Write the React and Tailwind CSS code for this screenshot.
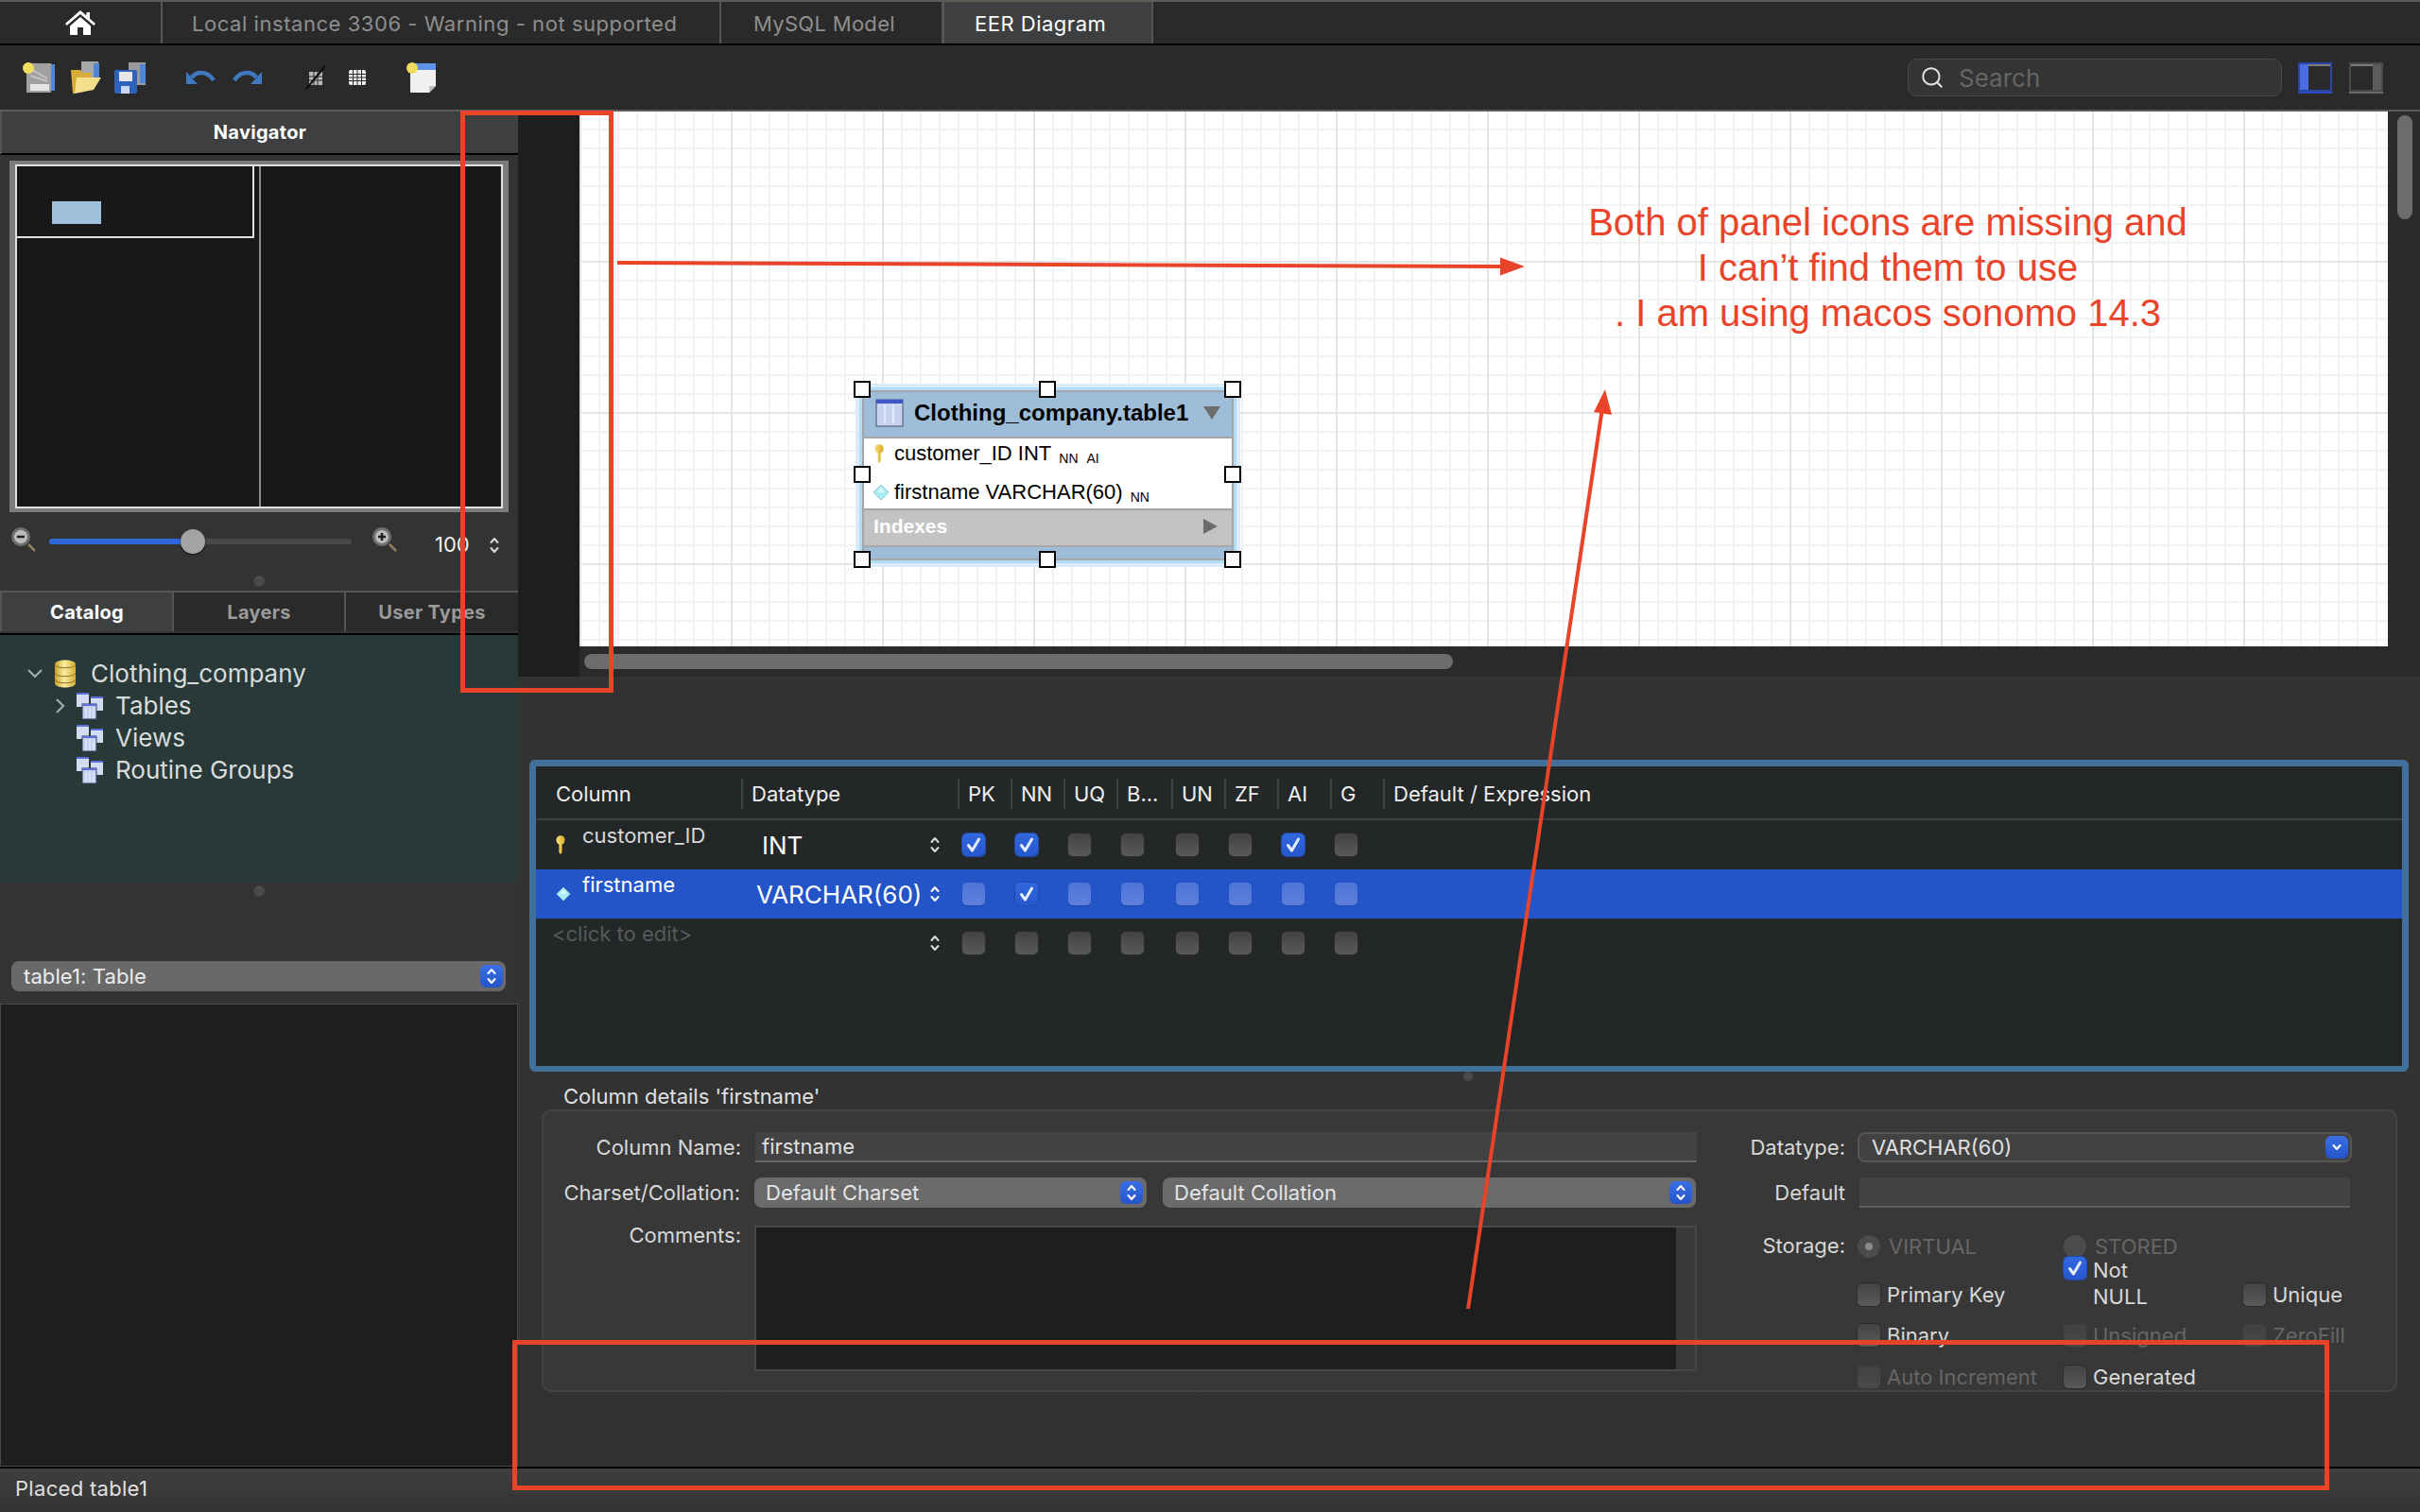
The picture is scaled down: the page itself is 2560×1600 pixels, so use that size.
import { Search } from 'lucide-react';

const TABLE_COLS = 'grid grid-cols-[217px_229px_56px_56px_56px_58px_56px_56px_56px_56px_1fr]';

function Stepper({ className = 'text-[#d8d8d8]' }) {
  return (
    <svg width="10" height="18" viewBox="0 0 10 18" fill="none" stroke="currentColor" strokeWidth="2" strokeLinecap="round" strokeLinejoin="round" className={className}>
      <path d="M1.5 6 5 2l3.5 4" />
      <path d="M1.5 12 5 16l3.5-4" />
    </svg>
  );
}

function BlueStepper({ down }) {
  return (
    <span className="flex h-6 w-6 items-center justify-center rounded-[6px] bg-gradient-to-b from-[#3a6fe6] to-[#2553c9] text-white">
      {down ? (
        <svg width="10" height="8" viewBox="0 0 10 8" fill="none" stroke="currentColor" strokeWidth="2" strokeLinecap="round" strokeLinejoin="round"><path d="M1.5 2 5 6l3.5-4" /></svg>
      ) : (
        <Stepper className="text-white" />
      )}
    </span>
  );
}

function Check() {
  return (
    <svg width="24" height="24" viewBox="0 0 24 24" fill="none" stroke="#e4ebfa" strokeWidth="3" strokeLinecap="round" strokeLinejoin="round"><path d="m6.5 12.5 4 5.5 7-12" /></svg>
  );
}

function Box({ checked, tone = 'dark' }) {
  let look = 'from-[#434343] to-[#5a5a5a] shadow-[0_0_0_1px_#2c2c2c]';
  if (checked) look = 'from-[#3268e0] to-[#2756cc] shadow-[0_0_0_1px_#1f4aa8]';
  else if (tone === 'sel') look = 'from-[#4e74d8] to-[#5e80dc] shadow-[0_1px_1px_#1e47a8]';
  else if (tone === 'off') look = 'from-[#414141] to-[#4a4a4a]';
  return (
    <span className={`block h-6 w-6 shrink-0 rounded-[5px] bg-gradient-to-b ${look}`}>
      {checked && <Check />}
    </span>
  );
}

function KeyIcon({ className }) {
  return (
    <svg viewBox="0 0 10 20" className={className}>
      <defs>
        <linearGradient id="keyfill" x1="0" x2="1"><stop offset="0" stopColor="#f7e27a" /><stop offset="1" stopColor="#d9a925" /></linearGradient>
      </defs>
      <ellipse cx="5" cy="5" rx="4.6" ry="4.8" fill="url(#keyfill)" />
      <path d="M3.4 8h3.2v10L5 20l-1.6-2z" fill="url(#keyfill)" />
    </svg>
  );
}

function DiamondIcon({ className }) {
  return (
    <svg viewBox="0 0 18 18" className={className}>
      <path d="M9 1l8 8-8 8-8-8z" fill="#a9ecf2" stroke="#8fc7d2" strokeWidth="1" />
      <path d="M9 3l4 6H5z" fill="#d8fafc" />
    </svg>
  );
}

function FolderIcon() {
  return (
    <svg width="30" height="30" viewBox="0 0 30 30" className="shrink-0">
      <rect x="1" y="1" width="13" height="15" fill="#d4dcf4" />
      <rect x="1" y="1" width="13" height="2" fill="#5a6ed8" />
      <rect x="16" y="5" width="13" height="15" fill="#d4dcf4" />
      <rect x="16" y="5" width="13" height="2" fill="#5a6ed8" />
      <rect x="7" y="13" width="15" height="16" fill="#c4d0f0" stroke="#313f58" strokeWidth="1" />
      <rect x="7" y="13" width="15" height="2" fill="#5a6ed8" />
      <path d="M11 17v11M15 17v11M19 17v11" stroke="#eef2fc" strokeWidth="1" />
    </svg>
  );
}

function DbIcon() {
  return (
    <svg width="24" height="30" viewBox="0 0 24 30" className="shrink-0">
      <defs>
        <linearGradient id="dbfill" x1="0" x2="1"><stop offset="0" stopColor="#c8a12c" /><stop offset=".45" stopColor="#fbeea0" /><stop offset="1" stopColor="#d2ab35" /></linearGradient>
      </defs>
      <path d="M1 5c0-6 22-6 22 0v20c0 6-22 6-22 0z" fill="url(#dbfill)" />
      <path d="M1 5c0 5 22 5 22 0M1 14c0 5 22 5 22 0M1 21c0 5 22 5 22 0" fill="none" stroke="#8f7420" strokeWidth="1" />
    </svg>
  );
}

function Magnifier({ plus }) {
  return (
    <svg width="30" height="28" viewBox="0 0 30 28">
      <circle cx="12" cy="11" r="10" fill="#6f6f6f" />
      <circle cx="12" cy="11" r="7" fill="#bdbdbd" />
      <path d="M8 11h8" stroke="#222" strokeWidth="2.5" />
      {plus && <path d="M12 7v8" stroke="#222" strokeWidth="2.5" />}
      <path d="M20 19l7 7" stroke="#8f7f5c" strokeWidth="2.5" />
    </svg>
  );
}

function Toolbar() {
  return (
    <div className="flex h-[70px] shrink-0 items-center border-b-2 border-[#5c5c5c] bg-[#2a2a2a] pl-[24px] pr-[39px]">
      <svg width="36" height="34" viewBox="0 0 36 34" className="shrink-0">
        <rect x="26" y="3" width="8" height="28" fill="#4f86d8" />
        <rect x="4" y="2" width="26" height="31" fill="#a0a0a0" />
        <path d="M8 8l18 10M8 15l18 6" stroke="#c4c4c4" strokeWidth="2" />
        <rect x="8" y="24" width="20" height="7" fill="#e4e4e4" />
        <circle cx="6" cy="7" r="6" fill="#f1dc5e" />
      </svg>
      <svg width="34" height="36" viewBox="0 0 34 36" className="ml-[14px] shrink-0">
        <rect x="12" y="1" width="18" height="20" fill="#a8a8a8" />
        <rect x="25" y="3" width="6" height="16" fill="#4f86d8" />
        <path d="M1 10h10l2 3h9v14L5 35H3z" fill="#d6ad38" />
        <path d="M7 18h26l-8 13L5 35z" fill="#f3df8c" />
      </svg>
      <svg width="36" height="34" viewBox="0 0 36 34" className="ml-[12px] shrink-0">
        <rect x="16" y="1" width="18" height="24" fill="#9a9a9a" />
        <rect x="28" y="3" width="6" height="20" fill="#4f86d8" />
        <rect x="1" y="9" width="24" height="25" rx="2" fill="#2e62bc" />
        <rect x="6" y="11" width="14" height="10" fill="#e6e6e6" />
        <rect x="8" y="26" width="9" height="8" fill="#c9d6ee" />
      </svg>
      <svg width="32" height="18" viewBox="0 0 32 18" className="ml-[40px] shrink-0" fill="none">
        <path d="M7 9C12 2 24 2 30 12" stroke="#3f78be" strokeWidth="4.5" />
        <path d="M1 3v13h12z" fill="#3f78be" />
      </svg>
      <svg width="32" height="18" viewBox="0 0 32 18" className="ml-[18px] shrink-0" fill="none">
        <path d="M25 9C20 2 8 2 2 12" stroke="#3f78be" strokeWidth="4.5" />
        <path d="M31 3v13H19z" fill="#3f78be" />
      </svg>
      <svg width="24" height="26" viewBox="0 0 24 26" className="ml-[44px] shrink-0" fill="none">
        <rect x="5" y="7" width="14" height="14" fill="#b9b9b9" />
        <path d="M5 12h14M5 16h14M10 7v14M14 7v14" stroke="#2a2a2a" strokeWidth="1" />
        <path d="M2 25 22 1" stroke="#0c0c0c" strokeWidth="2" />
      </svg>
      <svg width="18" height="16" viewBox="0 0 18 16" className="ml-[23px] shrink-0">
        <rect width="18" height="16" rx="2" fill="#ececec" />
        <path d="M0 4.500h18M0 8h18M0 11.500h18M4.500 0v16M9 0v16M13.500 0v16" stroke="#2a2a2a" strokeWidth="1" />
      </svg>
      <svg width="32" height="34" viewBox="0 0 32 34" className="ml-[43px] shrink-0">
        <path d="M4 2h27v24l-7 7H4z" fill="#f0f0f0" />
        <rect x="6" y="2" width="25" height="7" fill="#5b93e6" />
        <path d="M24 33v-7h7z" fill="#bdbdbd" />
        <circle cx="6" cy="7" r="6" fill="#f1dc5e" />
      </svg>
      <div className="ml-auto flex h-[40px] w-[396px] items-center rounded-[10px] border border-[#4a4a4a] bg-[#343434] pl-[12px]">
        <Search size={26} strokeWidth={1.800} className="text-[#e4e4e4]" />
        <span className="ml-[15px] text-[26px] text-[#656565]">Search</span>
      </div>
      <div className="ml-[17px] flex h-[33px] w-[36px] border-b-[2px] border-[#2b4db8]">
        <div className="flex h-full w-full border-2 border-t-[2px] border-[#2d44a8]">
          <div className="w-[9px] bg-[#4a6de4]" />
          <div className="flex-1 border-t-[2px] border-[#7c7c7c] bg-[#2a2a2a]" />
        </div>
      </div>
      <div className="ml-[18px] flex h-[33px] w-[36px] border-b-[2px] border-[#6a6a6a]">
        <div className="flex h-full w-full border-2 border-[#4a4a4a]">
          <div className="flex-1 border-t-[2px] border-[#7c7c7c] bg-[#2a2a2a]" />
          <div className="w-[9px] bg-[#5c5c5c]" />
        </div>
      </div>
    </div>
  );
}

function TopTabs() {
  return (
    <div className="flex h-[48px] shrink-0 border-y-2 border-t-[#5c5c54] border-b-black bg-[#2a2a2a] text-[22px] text-[#8f8f8f]">
      <div className="flex w-[172px] items-center justify-center border-r-2 border-[#555]">
        <svg width="32" height="28" viewBox="0 0 32 28" fill="#fff">
          <path d="M16 1 0 15l1.600 2L16 5l14.400 12 1.600-2-6-5.300V3h-3.500v3.600z" />
          <path d="M5 17.500 16 8l11 9.500V27h-8v-8h-6v8H5z" />
        </svg>
      </div>
      <div className="flex w-[591px] items-center border-r-2 border-[#555] pl-[31px] pt-[2px] tracking-[0.55px]">Local instance 3306 - Warning - not supported</div>
      <div className="flex w-[236px] items-center border-r-[3px] border-[#555] pl-[34px] pt-[2px] tracking-[0.3px]">MySQL Model</div>
      <div className="flex w-[221px] items-center border-r-2 border-[#555] bg-[#3d3f40] pl-[32px] pt-[2px] tracking-[0.5px] text-white">EER Diagram</div>
    </div>
  );
}

function Navigator() {
  return (
    <>
      <div className="flex h-[46px] shrink-0 items-center justify-center border-b-2 border-l-2 border-b-black border-l-[#555] bg-[#3d3f41] pb-[1px] text-[20px] font-bold tracking-[0.3px] text-white">Navigator</div>
      <div className="mx-[10px] mt-[6px] h-[372px] border-x-[6px] border-y-[4px] border-[#7c7c7c] bg-[#181818]">
        <div className="relative flex h-full border-2 border-[#e2e2e2]">
          <div className="h-[76px] w-[251px] border-r-2 border-b-2 border-[#e2e2e2]">
            <div className="ml-[37px] mt-[37px] h-[24px] w-[52px] bg-[#a0bfdb]" />
          </div>
          <div className="ml-[5px] h-full w-[2px] bg-[#8d8d8d]" />
        </div>
      </div>
      <div className="flex h-[66px] shrink-0 items-center pl-[10px]">
        <div className="mb-[8px]"><Magnifier /></div>
        <div className="relative ml-[12px] mb-[4px] h-[6px] w-[320px] rounded-full bg-[#484848]">
          <div className="h-full w-[152px] rounded-l-full bg-[#2f66dc]" />
          <div className="absolute left-[139px] top-[-10px] h-[26px] w-[26px] rounded-full bg-[#a3a3a3] shadow-[0_1px_2px_#111]" />
        </div>
        <div className="ml-[20px] mb-[8px]"><Magnifier plus /></div>
        <span className="ml-[38px] mt-[3px] text-[22px] text-[#f0f0f0]">100</span>
        <Stepper className="ml-[21px] mt-[4px] text-[#d8d8d8]" />
      </div>
      <div className="flex h-[17px] shrink-0 justify-center"><div className="mt-[1px] h-3 w-3 rounded-full bg-[#4a4a4a]" /></div>
      <div className="flex h-[47px] shrink-0 border-y-2 border-t-[#555] border-b-black pb-[2px] text-[20px] font-bold tracking-[0.3px] text-[#9b9b9b]">
        <div className="flex w-[184px] items-center justify-center border-x-2 border-l-[#555] border-r-[#555] bg-[#3d3f41] text-white">Catalog</div>
        <div className="flex w-[182px] items-center justify-center border-r-2 border-[#555] bg-[#2a2a2a]">Layers</div>
        <div className="flex flex-1 items-center justify-center bg-[#2a2a2a]">User Types</div>
      </div>
    </>
  );
}

function TreeRow({ icon, label, chevron, indent }) {
  return (
    <div className={`flex h-[34px] items-center ${indent ? 'pl-[59px]' : 'pl-[29px]'} text-[26px] leading-none text-[#d8dcdc]`}>
      <span className={`flex shrink-0 items-center ${indent ? 'w-[21px]' : 'w-[28px]'}`}>
        {chevron === 'down' && (
          <svg width="16" height="10" viewBox="0 0 16 10" fill="none" stroke="#a8b0b0" strokeWidth="2"><path d="m1 1 7 7 7-7" /></svg>
        )}
        {chevron === 'right' && (
          <svg width="10" height="16" viewBox="0 0 10 16" fill="none" stroke="#a8b0b0" strokeWidth="2"><path d="m1 1 7 7-7 7" /></svg>
        )}
      </span>
      {icon}
      <span className={indent ? 'ml-[12px]' : 'ml-[15px]'}>{label}</span>
    </div>
  );
}

function Sidebar() {
  return (
    <div className="flex w-[548px] shrink-0 flex-col bg-[#333333]">
      <Navigator />
      <div className="h-[262px] shrink-0 bg-[#283938] pt-[24px]">
        <TreeRow chevron="down" icon={<DbIcon />} label="Clothing_company" />
        <TreeRow chevron="right" indent icon={<FolderIcon />} label="Tables" />
        <TreeRow indent icon={<FolderIcon />} label="Views" />
        <TreeRow indent icon={<FolderIcon />} label="Routine Groups" />
      </div>
      <div className="h-[128px] shrink-0 pt-[3px]">
        <div className="mx-auto h-3 w-3 rounded-full bg-[#4a4a4a]" />
        <div className="ml-[12px] mt-[68px] flex h-[32px] w-[523px] items-center justify-between rounded-[8px] bg-[#696969] pl-[13px] pr-[3px] text-[22px] tracking-[0.1px] text-[#ececec]">
          table1: Table
          <BlueStepper />
        </div>
      </div>
      <div className="flex-1 border border-[#484848] bg-[#1e1e1e]" />
    </div>
  );
}

function Handle({ className }) {
  return <span className={`absolute h-[18px] w-[18px] border-2 border-black bg-white ${className}`} />;
}

function EntityBox() {
  return (
    <div className="absolute left-[300px] top-[295px] h-[180px] w-[393px] rounded-[8px] bg-[#9dbdd8] text-black shadow-[0_0_0_3px_#b2dcf4,0_0_0_7px_#d8edf9] [font-family:'Liberation_Sans',sans-serif]">
      <div className="flex h-[180px] flex-col overflow-hidden rounded-[8px] border-2 border-[#a3a6a8]">
        <div className="flex h-[47px] shrink-0 items-center pb-[3px] pl-[12px] pr-[12px]">
          <svg width="30" height="30" viewBox="0 0 30 30" className="shrink-0">
            <rect x="1" y="1" width="28" height="28" fill="#c7d3ee" stroke="#46546c" strokeWidth="1" />
            <rect x="1" y="1" width="28" height="4" fill="#3f55c9" />
            <path d="M10 6v20M19 6v20" stroke="#e2e9fa" strokeWidth="2" />
          </svg>
          <span className="ml-[11px] text-[24px] font-bold leading-none">Clothing_company.table1</span>
          <svg width="18" height="14" viewBox="0 0 18 14" className="ml-auto"><path d="M0 0h18L9 14z" fill="#6c6c6c" /></svg>
        </div>
        <div className="h-[78px] shrink-0 border-y-2 border-[#a3a6a8] bg-white text-[22px] leading-none">
          <div className="flex h-[32px] items-center pl-[11px]">
            <KeyIcon className="h-[20px] w-[10px] shrink-0" />
            <span className="ml-[11px]">customer_ID INT</span>
            <span className="ml-[8px] mt-[10px] text-[14px]">NN</span>
            <span className="ml-[9px] mt-[10px] text-[14px]">AI</span>
          </div>
          <div className="mt-[6px] flex h-[38px] items-center pl-[9px]">
            <DiamondIcon className="h-[18px] w-[18px] shrink-0" />
            <span className="ml-[5px]">firstname VARCHAR(60)</span>
            <span className="ml-[8px] mt-[10px] text-[14px]">NN</span>
          </div>
        </div>
        <div className="flex h-[39px] shrink-0 items-center border-b-2 border-[#a9a9a9] bg-[#c3c3c3] pb-[4px] pl-[10px] pr-[15px] text-[21px] font-bold text-white">
          Indexes
          <svg width="15" height="16" viewBox="0 0 15 16" className="ml-auto"><path d="M0 0l15 8-15 8z" fill="#6c6c6c" /></svg>
        </div>
      </div>
      <Handle className="left-[-9px] top-[-10px]" />
      <Handle className="left-[187px] top-[-10px]" />
      <Handle className="left-[383px] top-[-10px]" />
      <Handle className="left-[-9px] top-[80px]" />
      <Handle className="left-[383px] top-[80px]" />
      <Handle className="left-[-9px] top-[170px]" />
      <Handle className="left-[187px] top-[170px]" />
      <Handle className="left-[383px] top-[170px]" />
    </div>
  );
}

function Canvas() {
  return (
    <div className="flex h-[598px] shrink-0">
      <div className="w-[65px] shrink-0 bg-[#1e1e1e]" />
      <div className="flex w-[1913px] shrink-0 flex-col">
        <div className="relative h-[566px] shrink-0 bg-white bg-[linear-gradient(to_right,#e4e4e4_2px,transparent_2px),linear-gradient(to_bottom,#e4e4e4_2px,transparent_2px),linear-gradient(to_right,#f3f3f3_2px,transparent_2px),linear-gradient(to_bottom,#f3f3f3_2px,transparent_2px)] bg-[size:160px_160px,160px_160px,20px_20px,20px_20px] bg-[position:0_-2px]">
          <div className="absolute left-[-1px] top-0"><EntityBox /></div>
        </div>
        <div className="flex flex-1 items-center bg-[#2a2a2a] pl-[5px]">
          <div className="h-[16px] w-[919px] rounded-full bg-[#6c6c6c]" />
        </div>
      </div>
      <div className="flex-1 bg-[#2a2a2a] pl-[10px] pt-[4px]">
        <div className="h-[110px] w-[16px] rounded-full bg-[#6c6c6c]" />
      </div>
    </div>
  );
}

const HEADERS = ['Column', 'Datatype', 'PK', 'NN', 'UQ', 'B...', 'UN', 'ZF', 'AI', 'G', 'Default / Expression'];

function TableRow({ icon, name, nameClass = 'text-[#d8d8d8]', type, typeClass, checks = [], selected }) {
  return (
    <div className={`${TABLE_COLS} h-[52px] ${selected ? 'bg-[#2355c8]' : ''}`}>
      <div className="flex pl-[21px]">
        <span className="flex w-[28px] shrink-0 items-center">{icon}</span>
        <span className={`mt-[3px] h-[26px] text-[22px] leading-[26px] ${nameClass}`}>{name}</span>
      </div>
      <div className="flex items-center justify-between pr-[19px]">
        <span className={`text-[26px] text-white ${typeClass}`}>{type}</span>
        <Stepper className={selected ? 'text-white' : 'text-[#d8d8d8]'} />
      </div>
      {[0, 1, 2, 3, 4, 5, 6, 7].map((i) => (
        <div key={i} className="flex items-center pl-[5px]">
          <Box checked={checks.includes(i)} tone={selected ? 'sel' : 'dark'} />
        </div>
      ))}
    </div>
  );
}

function ColumnsTable() {
  return (
    <div className="relative ml-[12px] mt-[88px] h-[330px] w-[1988px] shrink-0 rounded-[6px] border-x-[7px] border-t-[7px] border-b-[6px] border-[#41709a] bg-[#232727]">
      <div className={`${TABLE_COLS} h-[57px] items-center border-b-2 border-[#3b3f3f] pt-[3px] text-[22px] text-[#eeeeee]`}>
        {HEADERS.map((h, i) => (
          <div key={h} className={`flex h-[32px] items-center whitespace-nowrap ${i > 0 ? 'border-l-2 border-[#3f4343] pl-[9px]' : 'pl-[21px]'}`}>{h}</div>
        ))}
      </div>
      <TableRow icon={<KeyIcon className="h-[20px] w-[10px]" />} name="customer_ID" type="INT" typeClass="mt-[1px] pl-[22px]" checks={[0, 1, 6]} />
      <TableRow selected icon={<DiamondIcon className="h-[16px] w-[16px]" />} name="firstname" nameClass="text-white" type="VARCHAR(60)" typeClass="mt-[1px] pl-[16px]" checks={[1]} />
      <TableRow name="<click to edit>" nameClass="-ml-[32px] text-[#565a5a]" type="" />
    </div>
  );
}

function Label({ children, className = 'w-[209px]' }) {
  return <span className={`shrink-0 text-right text-[22px] text-[#d8d8d8] ${className}`}>{children}</span>;
}

function CheckField({ checked, off, label }) {
  return (
    <div className="flex items-center">
      <Box checked={checked} tone={off ? 'off' : 'dark'} />
      {label && <span className={`ml-[7px] text-[22px] leading-none ${off ? 'text-[#666]' : 'text-[#d8d8d8]'}`}>{label}</span>}
    </div>
  );
}

function Radio({ dot, label }) {
  return (
    <div className="flex items-center">
      <span className="flex h-6 w-6 items-center justify-center rounded-full bg-[#4c4c4c]">
        {dot && <span className="h-2 w-2 rounded-full bg-[#8a8a8a]" />}
      </span>
      <span className="ml-[9px] text-[22px] leading-none text-[#666]">{label}</span>
    </div>
  );
}

function SelectBox({ label, className }) {
  return (
    <div className={`flex h-[32px] items-center justify-between rounded-[8px] bg-[#6a6a6a] pl-[12px] pr-[4px] text-[22px] text-[#e4e4e4] ${className}`}>
      {label}
      <BlueStepper />
    </div>
  );
}

function ColumnDetails() {
  return (
    <>
      <div className="ml-[48px] mt-[13px] h-[26px] text-[22px] leading-[26px] text-[#e0e0e0]">Column details 'firstname'</div>
      <div className="ml-[25px] mt-[1px] flex h-[299px] w-[1963px] shrink-0 rounded-[10px] border-2 border-[#444444] bg-[#383838]">
        <div className="w-[1222px] shrink-0 pt-[22px]">
          <div className="flex h-[32px] items-center">
            <Label>Column Name:</Label>
            <div className="ml-[15px] flex h-[32px] w-[996px] items-center border-b-2 border-[#666] bg-[#434343] pl-[7px] text-[22px] text-[#e0e0e0]">firstname</div>
          </div>
          <div className="mt-[16px] flex h-[32px] items-center">
            <Label className="-ml-[1px] w-[209px]">Charset/Collation:</Label>
            <SelectBox className="ml-[15px] w-[415px]" label="Default Charset" />
            <SelectBox className="ml-[17px] w-[564px]" label="Default Collation" />
          </div>
          <div className="mt-[19px] flex">
            <Label className="mt-[-6px] h-[28px] w-[209px]">Comments:</Label>
            <div className="ml-[14px] flex h-[154px] w-[997px] border-2 border-[#484848] bg-[#1e1e1e]">
              <div className="ml-auto w-[20px] bg-[#3a3a3a]" />
            </div>
          </div>
        </div>
        <div className="flex-1 pt-[22px]">
          <div className="flex h-[32px] items-center">
            <Label className="w-[155px]">Datatype:</Label>
            <div className="ml-[13px] flex h-[32px] w-[523px] items-center justify-between rounded-[8px] border-2 border-[#565656] bg-[#424242] pl-[13px] pr-[2px] text-[22px] text-[#e0e0e0]">
              VARCHAR(60)
              <BlueStepper down />
            </div>
          </div>
          <div className="mt-[16px] flex h-[32px] items-center">
            <Label className="w-[155px]">Default</Label>
            <div className="ml-[15px] h-[32px] w-[519px] border-b-2 border-[#5e5e5e] bg-[#434343]" />
          </div>
          <div className="flex">
            <Label className="mt-[27px] h-[26px] w-[155px] leading-[26px]">Storage:</Label>
            <div className="ml-[13px] mt-[29px] grid grid-cols-[218px_190px_1fr] grid-rows-[24px_52px_24px_24px]">
              <Radio dot label="VIRTUAL" />
              <Radio label="STORED" />
              <div />
              <div className="flex items-end pb-[1px]"><CheckField label="Primary Key" /></div>
              <div className="-mt-[1px] flex">
                <Box checked />
                <span className="ml-[7px] w-[70px] text-[22px] leading-[28px] text-[#d8d8d8]">Not NULL</span>
              </div>
              <div className="flex items-end pb-[1px]"><CheckField label="Unique" /></div>
              <div className="mt-[18px]"><CheckField label="Binary" /></div>
              <div className="mt-[18px]"><CheckField off label="Unsigned" /></div>
              <div className="mt-[18px]"><CheckField off label="ZeroFill" /></div>
              <div className="mt-[38px]"><CheckField off label="Auto Increment" /></div>
              <div className="mt-[38px]"><CheckField label="Generated" /></div>
            </div>
          </div>
        </div>
      </div>
    </>
  );
}

function Annotations() {
  const red = '#e9432a';
  return (
    <>
      <svg width="2560" height="1600" viewBox="0 0 2560 1600" className="pointer-events-none absolute inset-0">
        <path d="M653 278 1590 282" stroke={red} strokeWidth="4" />
        <path d="M1613 282 1587 272.500v19z" fill={red} />
        <path d="M1553 1385 1695 432" stroke={red} strokeWidth="4" />
        <path d="M1698 412 1686 436l19 3z" fill={red} />
      </svg>
      <div className="pointer-events-none absolute left-[487px] top-[117px] h-[616px] w-[162px] border-[5px] border-[#e9432a]" />
      <div className="pointer-events-none absolute left-[542px] top-[1418px] h-[159px] w-[1922px] border-[5px] border-[#e9432a]" />
      <div className="pointer-events-none absolute left-[1497px] top-[211px] w-[1000px] text-center text-[40px] leading-[48px] text-[#e9432a] [font-family:'Liberation_Sans',sans-serif]">
        <p>Both of panel icons are missing and</p>
        <p>I can’t find them to use</p>
        <p>. I am using macos sonomo 14.3</p>
      </div>
    </>
  );
}

export default function App() {
  return (
    <div className="relative flex h-[1600px] w-[2560px] flex-col overflow-hidden bg-[#333333] [font-family:Inter,sans-serif]">
      <TopTabs />
      <Toolbar />
      <div className="flex h-[1434px] shrink-0">
        <Sidebar />
        <div className="relative flex w-[2012px] flex-col bg-gradient-to-b from-[#333333] to-[#323232]">
          <Canvas />
          <ColumnsTable />
          <div className="absolute left-[1000px] top-[1016px] h-[10px] w-[10px] rounded-full bg-[#4a4a4a]" />
          <ColumnDetails />
        </div>
      </div>
      <div className="flex flex-1 items-center border-t-2 border-black bg-gradient-to-b from-[#3f3f3f] to-[#333333] pb-[3px] pl-[16px] text-[22px] tracking-[0.3px] text-[#e0e0e0]">Placed table1</div>
      <Annotations />
    </div>
  );
}
